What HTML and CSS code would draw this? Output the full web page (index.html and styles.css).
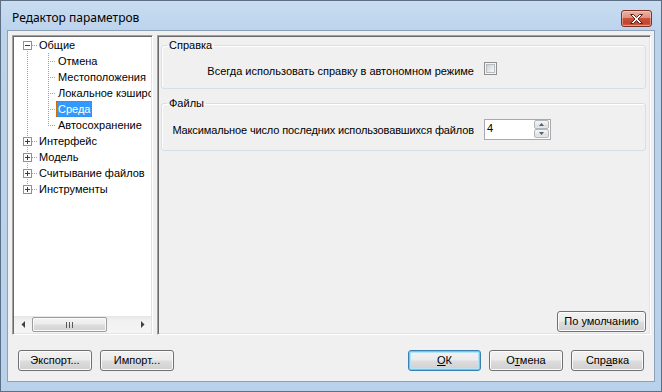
FILE: index.html
```html
<!DOCTYPE html>
<html lang="ru">
<head>
<meta charset="utf-8">
<title>Редактор параметров</title>
<link rel="stylesheet" href="styles.css">
</head>
<body>
<div class="window">
  <div class="titlebar">
    <span class="title">Редактор параметров</span>
    <span class="close">
      <svg width="13" height="10" viewBox="0 0 13 10"><path d="M0.5 0.5h3l3 3 3-3h3l-4.5 4.5 4.5 4.5h-3l-3-3-3 3h-3l4.5-4.5z" fill="#fff" stroke="#5b2219" stroke-width="1" stroke-linejoin="round"/></svg>
    </span>
  </div>
  <div class="client">
    <div class="main">
      <div class="tree">
        <div class="tree-items">
          <div class="trow">
            <svg class="g1" width="23" height="16"><line x1="13.5" y1="12" x2="13.5" y2="16" class="dot"/><line x1="18" y1="8.5" x2="23" y2="8.5" class="dot"/><rect x="9.5" y="4.5" width="8" height="8" class="box"/><path d="M11 8.5h5" class="sign"/></svg>
            <span class="lbl">Общие</span>
          </div>
          <div class="trow">
            <svg class="g2" width="42" height="16"><line x1="13.5" y1="0" x2="13.5" y2="16" class="dot"/><line x1="34.5" y1="0" x2="34.5" y2="16" class="dot"/><line x1="36" y1="8.5" x2="42" y2="8.5" class="dot"/></svg>
            <span class="lbl">Отмена</span>
          </div>
          <div class="trow">
            <svg class="g2" width="42" height="16"><line x1="13.5" y1="0" x2="13.5" y2="16" class="dot"/><line x1="34.5" y1="0" x2="34.5" y2="16" class="dot"/><line x1="36" y1="8.5" x2="42" y2="8.5" class="dot"/></svg>
            <span class="lbl">Местоположения</span>
          </div>
          <div class="trow">
            <svg class="g2" width="42" height="16"><line x1="13.5" y1="0" x2="13.5" y2="16" class="dot"/><line x1="34.5" y1="0" x2="34.5" y2="16" class="dot"/><line x1="36" y1="8.5" x2="42" y2="8.5" class="dot"/></svg>
            <span class="lbl">Локальное кэширование</span>
          </div>
          <div class="trow">
            <svg class="g2" width="42" height="16"><line x1="13.5" y1="0" x2="13.5" y2="16" class="dot"/><line x1="34.5" y1="0" x2="34.5" y2="16" class="dot"/><line x1="36" y1="8.5" x2="42" y2="8.5" class="dot"/></svg>
            <span class="lbl selected">Среда</span>
          </div>
          <div class="trow">
            <svg class="g2" width="42" height="16"><line x1="13.5" y1="0" x2="13.5" y2="16" class="dot"/><line x1="34.5" y1="0" x2="34.5" y2="9" class="dot"/><line x1="36" y1="8.5" x2="42" y2="8.5" class="dot"/></svg>
            <span class="lbl">Автосохранение</span>
          </div>
          <div class="trow">
            <svg class="g1" width="23" height="16"><line x1="13.5" y1="0" x2="13.5" y2="16" class="dot"/><line x1="18" y1="8.5" x2="23" y2="8.5" class="dot"/><rect x="9.5" y="4.5" width="8" height="8" class="box"/><path d="M11 8.5h5M13.5 6v5" class="sign"/></svg>
            <span class="lbl">Интерфейс</span>
          </div>
          <div class="trow">
            <svg class="g1" width="23" height="16"><line x1="13.5" y1="0" x2="13.5" y2="16" class="dot"/><line x1="18" y1="8.5" x2="23" y2="8.5" class="dot"/><rect x="9.5" y="4.5" width="8" height="8" class="box"/><path d="M11 8.5h5M13.5 6v5" class="sign"/></svg>
            <span class="lbl">Модель</span>
          </div>
          <div class="trow">
            <svg class="g1" width="23" height="16"><line x1="13.5" y1="0" x2="13.5" y2="16" class="dot"/><line x1="18" y1="8.5" x2="23" y2="8.5" class="dot"/><rect x="9.5" y="4.5" width="8" height="8" class="box"/><path d="M11 8.5h5M13.5 6v5" class="sign"/></svg>
            <span class="lbl">Считывание файлов</span>
          </div>
          <div class="trow">
            <svg class="g1" width="23" height="16"><line x1="13.5" y1="0" x2="13.5" y2="5" class="dot"/><line x1="18" y1="8.5" x2="23" y2="8.5" class="dot"/><rect x="9.5" y="4.5" width="8" height="8" class="box"/><path d="M11 8.5h5M13.5 6v5" class="sign"/></svg>
            <span class="lbl">Инструменты</span>
          </div>
        </div>
        <div class="hscroll">
          <span class="sb-arrow"><svg width="4" height="7"><path d="M4 0v7L0.5 3.5z" fill="#404040"/></svg></span>
          <span class="sb-track">
            <span class="sb-thumb"><svg width="7" height="6"><path d="M0.5 0v6M3.5 0v6M6.5 0v6" stroke="#5a5a5a"/></svg></span>
          </span>
          <span class="sb-arrow"><svg width="4" height="7"><path d="M0 0v7L3.5 3.5z" fill="#404040"/></svg></span>
        </div>
      </div>
      <div class="panel">
        <fieldset class="group group-help">
          <legend>Справка</legend>
          <div class="grow-row">
            <span class="glabel shift">Всегда использовать справку в автономном режиме</span>
            <span class="ctl"><span class="checkbox"></span></span>
          </div>
        </fieldset>
        <fieldset class="group group-files">
          <legend>Файлы</legend>
          <div class="grow-row">
            <span class="glabel tight">Максимальное число последних использовавшихся файлов</span>
            <span class="ctl">
              <span class="spin">
                <span class="spin-val">4</span>
                <span class="spin-btns">
                  <span class="spin-btn"><svg width="5" height="3"><path d="M0 3h5L2.5 0z" fill="#4d5e80"/></svg></span>
                  <span class="spin-btn"><svg width="5" height="3"><path d="M0 0h5L2.5 3z" fill="#4d5e80"/></svg></span>
                </span>
              </span>
            </span>
          </div>
        </fieldset>
        <div class="panel-space"></div>
        <div class="panel-foot">
          <button class="btn btn-defaults">По умолчанию</button>
        </div>
      </div>
    </div>
    <div class="footer">
      <button class="btn btn-w">Экспорт...</button>
      <button class="btn btn-w">Импорт...</button>
      <span class="footer-space"></span>
      <button class="btn btn-ok btn-default"><u>О</u>К</button>
      <button class="btn btn-w">О<u>т</u>мена</button>
      <button class="btn btn-help">Спр<u>а</u>вка</button>
    </div>
  </div>
</div>
</body>
</html>
```
FILE: styles.css
```css
* { box-sizing: border-box; }
html, body { margin: 0; padding: 0; }
body {
  width: 662px;
  height: 392px;
  overflow: hidden;
  font-family: "Liberation Sans", Arial, sans-serif;
  font-size: 11px;
  color: #000;
  background: #fff;
}
.window {
  width: 662px;
  height: 392px;
  border: 1px solid #5d6f84;
  background: linear-gradient(to bottom, #c9dcf1 0px, #bcd3ec 30px, #b9d1ea 100%);
  display: flex;
  flex-direction: column;
}
.titlebar {
  height: 29px;
  flex: none;
  display: flex;
  align-items: flex-start;
  justify-content: space-between;
  padding: 9px 9px 0 11px;
}
.title {
  font-family: "Noto Sans", "Liberation Sans", sans-serif;
  font-size: 12px;
  line-height: 16px;
  color: #000;
}
.close {
  width: 31px;
  height: 17px;
  border: 1px solid #7a3327;
  border-radius: 3px;
  background: linear-gradient(to bottom, #ebb5a8 0%, #dd907f 45%, #c9543e 50%, #c2432c 80%, #d26a52 100%);
  box-shadow: inset 0 0 0 1px rgba(255, 220, 210, 0.45);
  display: flex;
  align-items: center;
  justify-content: center;
}
.close svg { display: block; }
.client {
  flex: 1;
  margin: 0 6px 9px 6px;
  border: 1px solid #8ca1b9;
  background: #f0f0f0;
  display: flex;
  flex-direction: column;
}
.main {
  height: 304px;
  flex: none;
  display: flex;
  gap: 4px;
  padding: 4px 3px 0 4px;
}
.tree {
  width: 141px;
  height: 300px;
  border: 1px solid;
  border-color: #a0a0a0 #ffffff #ffffff #a0a0a0;
  box-shadow: inset 1px 1px 0 #696969, inset -1px -1px 0 #e3e3e3;
  background: #fff;
  padding: 1px;
  display: flex;
  flex-direction: column;
}
.tree-items {
  flex: 1;
  overflow: hidden;
}
.trow {
  height: 16px;
  display: flex;
  align-items: center;
  white-space: nowrap;
}
.trow svg { display: block; flex: none; }
.dot { stroke: #a0a0a0; stroke-width: 1; stroke-dasharray: 1 1; }
.box { fill: #fdfdfd; stroke: #919191; }
.sign { stroke: #2c3e58; stroke-width: 1; fill: none; }
.lbl {
  line-height: 16px;
  padding: 0 2px;
}
.selected {
  background: #3399ff;
  color: #fff;
  outline: 1px dotted #c96a00;
  outline-offset: -1px;
}
.hscroll {
  height: 17px;
  flex: none;
  display: flex;
  background: linear-gradient(to bottom, #e6e6e6 0%, #f1f1f1 25%, #f5f5f5 100%);
}
.sb-arrow {
  width: 17px;
  display: flex;
  align-items: center;
  justify-content: center;
}
.sb-arrow svg { display: block; }
.sb-track {
  flex: 1;
  display: flex;
  align-items: center;
}
.sb-thumb {
  width: 75px;
  height: 15px;
  margin-left: 1px;
  border: 1px solid #9c9c9c;
  border-radius: 2px;
  background: linear-gradient(to bottom, #f4f4f4 0%, #ececec 45%, #dcdcdc 55%, #d2d2d2 100%);
  box-shadow: inset 0 0 0 1px #fafafa;
  display: flex;
  align-items: center;
  justify-content: center;
}
.sb-thumb svg { display: block; }
.panel {
  flex: 1;
  height: 300px;
  border: 1px solid;
  border-color: #a0a0a0 #ffffff #ffffff #a0a0a0;
  box-shadow: inset 1px 1px 0 #696969, inset -1px -1px 0 #e3e3e3;
  padding: 3px 4px 2px 3px;
  display: flex;
  flex-direction: column;
}
.group {
  margin: 0;
  padding: 0 94px 0 0;
  border: 1px solid #d5dfe5;
  border-radius: 3px;
  box-shadow: 1px 1px 0 #ffffff inset;
  min-width: 0;
}
.group legend {
  margin-left: 5px;
  padding: 0 2px;
  line-height: 13px;
  font-size: 11px;
}
.group-help { padding-bottom: 9px; }
.group-files { margin-top: 8px; padding-bottom: 10px; }
.grow-row {
  height: 21px;
  margin-top: 6px;
  display: flex;
  align-items: center;
  justify-content: flex-end;
  gap: 10px;
}
.group-files .grow-row { margin-top: 9px; }
.glabel { white-space: nowrap; }
.shift { padding-top: 5px; }
.tight { letter-spacing: -0.13px; }
.ctl {
  width: 67px;
  display: flex;
  align-items: center;
}
.checkbox {
  width: 13px;
  height: 13px;
  border: 1px solid #8e8f8f;
  background: #f4f4f4;
  box-shadow: inset 0 0 0 1px #f4f4f4, inset 0 0 0 2px #b9bcc0;
  margin-top: -1px;
}
.checkbox::after {
  content: "";
  display: block;
  margin: 2px;
  width: 7px;
  height: 7px;
  background: linear-gradient(135deg, #cbcfd5 0%, #e8eaec 60%, #f7f7f7 100%);
}
.spin {
  width: 67px;
  height: 21px;
  border: 1px solid #a7a9ad;
  background: #fff;
  display: flex;
}
.spin-val {
  flex: 1;
  padding-left: 2px;
  line-height: 17px;
}
.spin-btns {
  width: 16px;
  display: flex;
  flex-direction: column;
  padding: 0 1px 1px 0;
}
.spin-btn {
  flex: 1;
  border: 1px solid #b3b6ba;
  border-radius: 2px;
  background: linear-gradient(to bottom, #f6f6f6 0%, #e8e8e8 50%, #dcdcdc 51%, #e8e8e8 100%);
  display: flex;
  align-items: center;
  justify-content: center;
}
.spin-btn svg { display: block; }
.panel-space { flex: 1; }
.panel-foot {
  display: flex;
  justify-content: flex-end;
}
.btn {
  height: 21px;
  margin: 0;
  padding: 0;
  border: 1px solid #707070;
  border-radius: 3px;
  background: linear-gradient(to bottom, #f2f2f2 0%, #ebebeb 48%, #dddddd 52%, #cfcfcf 100%);
  box-shadow: inset 0 0 0 1px #fbfbfb;
  font-family: "Liberation Sans", Arial, sans-serif;
  font-size: 11px;
  color: #000;
  line-height: 17px;
}
.btn u { text-decoration: underline; text-underline-offset: 1px; }
.btn-defaults { width: 89px; }
.btn-w { width: 74px; }
.btn-ok { width: 73px; }
.btn-help { width: 73px; }
.btn-default {
  border-color: #3c7fb1;
  box-shadow: inset 0 0 0 1px #48d8fb, inset 0 0 0 2px #b4e4f8;
}
.footer {
  flex: 1;
  display: flex;
  align-items: flex-start;
  gap: 8px;
  padding: 15px 10px 0 10px;
}
.footer-space { flex: 1; }
```
